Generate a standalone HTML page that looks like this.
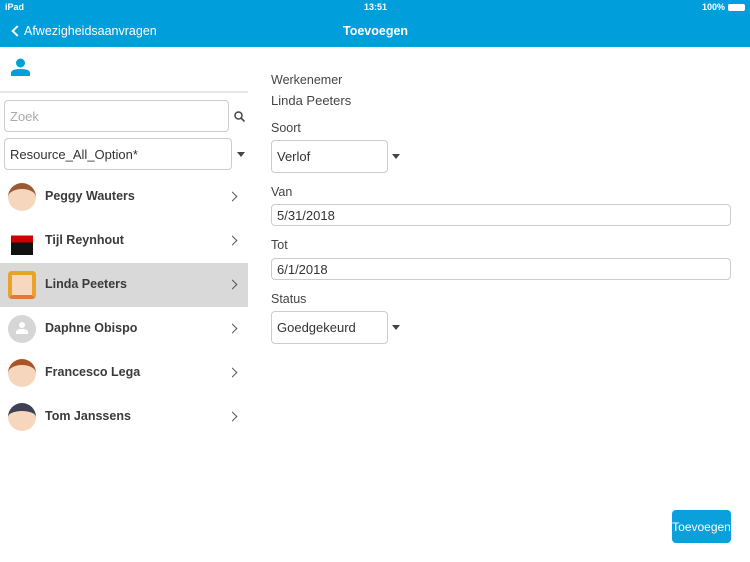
<!DOCTYPE html>
<html><head><meta charset="utf-8"><style>
*{box-sizing:border-box;margin:0;padding:0}
body{width:750px;height:562px;position:relative;overflow:hidden;background:#fff;font-family:"Liberation Sans",Arial,sans-serif;color:#333}
.top{position:absolute;left:0;top:0;width:750px;height:47px;background:#009fdb;color:#fff}
.abs{position:absolute}
.inp{position:absolute;border:1px solid #ccc;border-radius:4px;background:#fff;font-size:13px;color:#333;padding-left:5px;display:flex;align-items:center}
.lbl{position:absolute;left:271px;font-size:12.5px;color:#444}
.row{position:absolute;left:0;width:248px;height:44px}
.row .n{position:absolute;left:45px;top:14px;font-size:12.5px;font-weight:bold;color:#3a3a3a}
.row .c{position:absolute;left:229px;top:18px;width:7px;height:7px;border-right:1.6px solid #555;border-top:1.6px solid #555;transform:rotate(45deg)}
.av{position:absolute;left:8px;top:8px;width:28px;height:28px;border-radius:50%}
.caret{position:absolute;width:0;height:0;border-left:4px solid transparent;border-right:4px solid transparent;border-top:5px solid #444}
</style></head><body>
<div class="top">
 <div class="abs" style="left:5px;top:2px;font-size:9px;font-weight:bold">iPad</div>
 <div class="abs" style="left:364px;top:2px;font-size:9px;font-weight:bold">13:51</div>
 <div class="abs" style="left:702px;top:2px;font-size:9px;font-weight:bold">100%</div>
 <div class="abs" style="left:728px;top:4px;width:17px;height:7px;border:1px solid #fff;border-radius:2px;background:#fff"></div>
 <div class="abs" style="left:13px;top:27px;width:8px;height:8px;border-left:2px solid #fff;border-bottom:2px solid #fff;transform:rotate(45deg)"></div>
 <div class="abs" style="left:24px;top:24px;font-size:12.5px">Afwezigheidsaanvragen</div>
 <div class="abs" style="left:343px;top:24px;font-size:12.5px;font-weight:bold">Toevoegen</div>
</div>
<svg class="abs" style="left:11px;top:58px" width="19" height="18" viewBox="0 0 19 18"><circle cx="9.5" cy="5" r="4.5" fill="#009fdb"/><path d="M0 18 v-3 q0-4 9.5-4 q9.5 0 9.5 4 v3z" fill="#009fdb"/></svg>
<div class="abs" style="left:0;top:91px;width:248px;height:2px;background:#e6e6e6"></div>
<div class="inp" style="left:4px;top:100px;width:225px;height:32px;color:#aaa">Zoek</div>
<svg class="abs" style="left:234px;top:111px" width="11" height="11" viewBox="0 0 11 11"><circle cx="4.5" cy="4.5" r="3.5" stroke="#444" stroke-width="1.5" fill="none"/><path d="M7 7l3.5 3.5" stroke="#444" stroke-width="1.6"/></svg>
<div class="inp" style="left:4px;top:138px;width:228px;height:32px">Resource_All_Option*</div>
<div class="caret" style="left:237px;top:152px"></div>

<div class="row" style="top:175px"><div class="av" style="background:#f6d7bd;border-top:6px solid #9a5a36"></div><div class="n">Peggy Wauters</div><div class="c"></div></div>
<div class="row" style="top:219px"><div class="av" style="border-radius:0;background:linear-gradient(#fff 30%,#c00 30%,#c00 55%,#111 55%);width:22px;left:11px"></div><div class="n">Tijl Reynhout</div><div class="c"></div></div>
<div class="row" style="top:263px;background:#d9d9d9"><div class="av" style="border-radius:4px;background:#f7d8be;border:4px solid #e9a22a;border-bottom:4px solid #e07a3a"></div><div class="n">Linda Peeters</div><div class="c"></div></div>
<div class="row" style="top:307px"><div class="av" style="background:#d6d6d6"></div><svg class="abs" style="left:15px;top:14px" width="14" height="14" viewBox="0 0 14 14"><circle cx="7" cy="4" r="3" fill="#fff"/><path d="M1 13v-2q0-3 6-3t6 3v2z" fill="#fff"/></svg><div class="n">Daphne Obispo</div><div class="c"></div></div>
<div class="row" style="top:351px"><div class="av" style="background:#f6d7bd;border-top:6px solid #a9552a"></div><div class="n">Francesco Lega</div><div class="c"></div></div>
<div class="row" style="top:395px"><div class="av" style="background:#f6d7bd;border-top:8px solid #3c4252"></div><div class="n">Tom Janssens</div><div class="c"></div></div>

<div class="lbl" style="top:73px">Werkenemer</div>
<div class="abs" style="left:271px;top:93px;font-size:13px;color:#444">Linda Peeters</div>
<div class="lbl" style="top:121px">Soort</div>
<div class="inp" style="left:271px;top:140px;width:117px;height:33px">Verlof</div>
<div class="caret" style="left:392px;top:154px"></div>
<div class="lbl" style="top:185px">Van</div>
<div class="inp" style="left:271px;top:204px;width:460px;height:22px">5/31/2018</div>
<div class="lbl" style="top:238px">Tot</div>
<div class="inp" style="left:271px;top:258px;width:460px;height:22px">6/1/2018</div>
<div class="lbl" style="top:292px">Status</div>
<div class="inp" style="left:271px;top:311px;width:117px;height:33px">Goedgekeurd</div>
<div class="caret" style="left:392px;top:325px"></div>
<div class="abs" style="left:672px;top:510px;width:59px;height:33px;background:#0aa0dc;border-radius:4px;color:#fff;font-size:12px;display:flex;align-items:center;justify-content:center">Toevoegen</div>
</body></html>
